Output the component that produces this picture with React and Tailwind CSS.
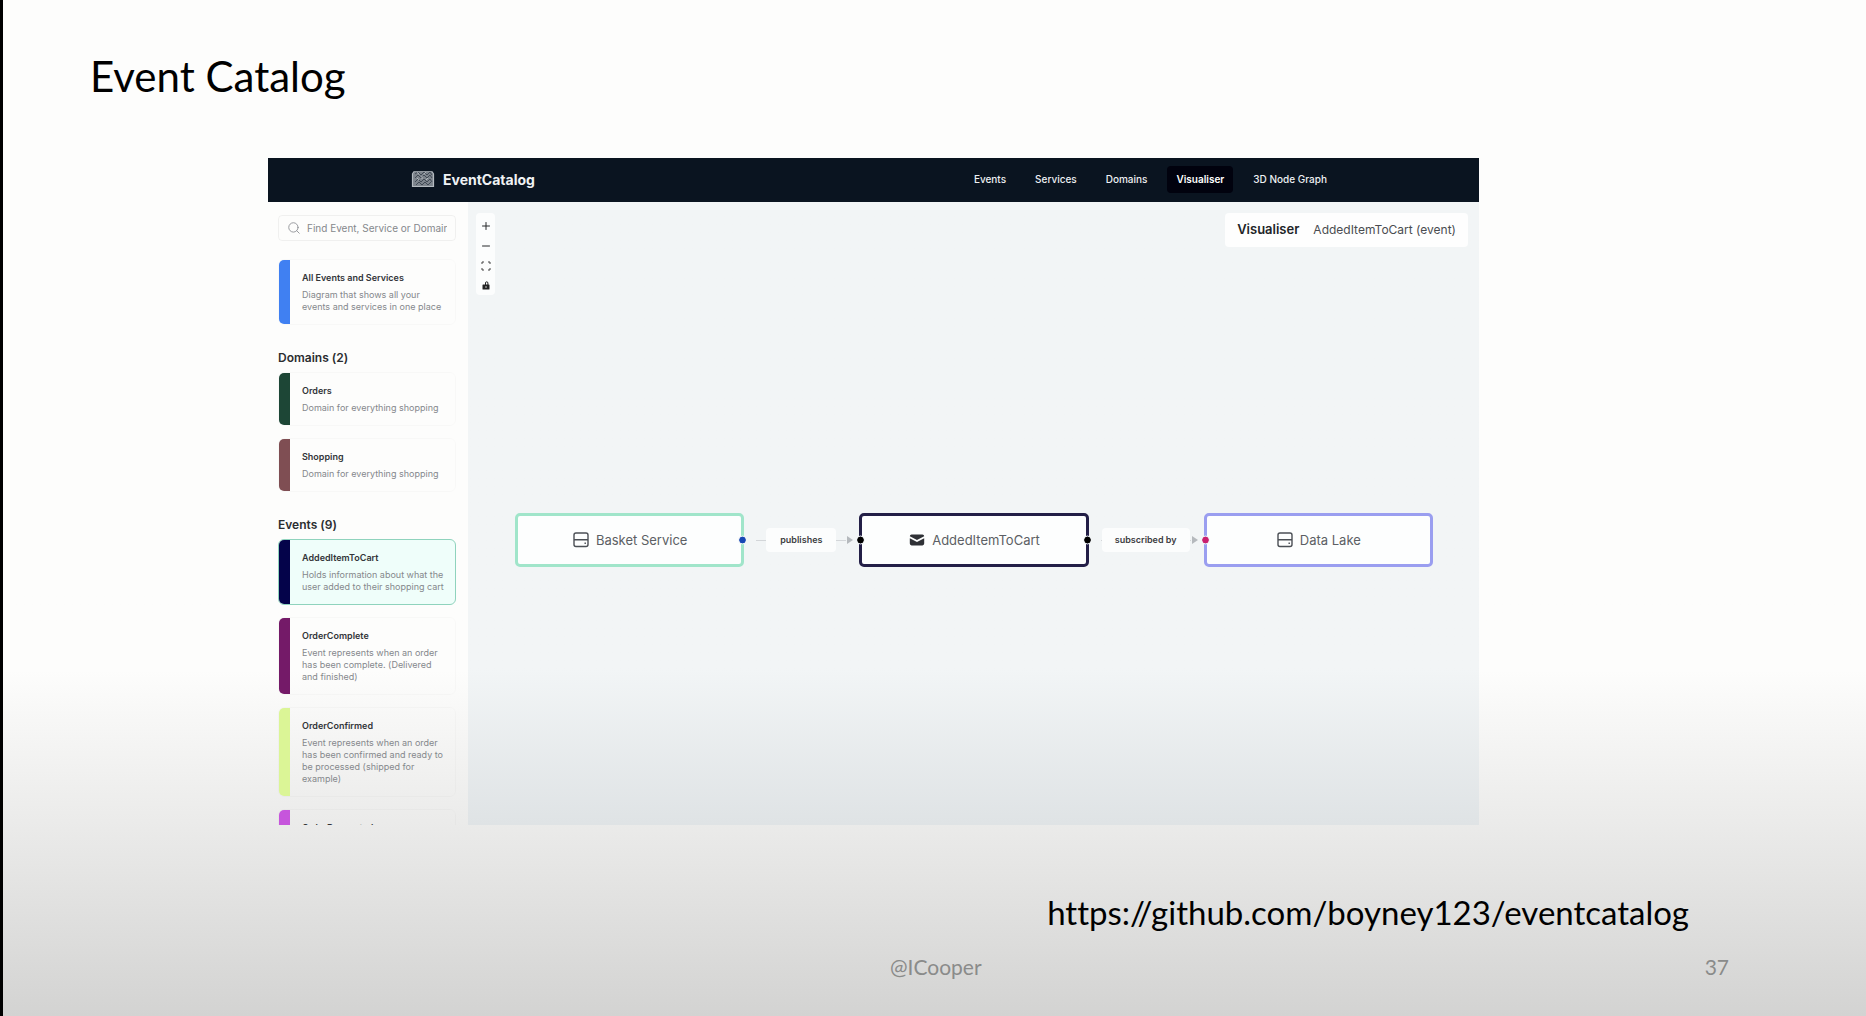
import { Search, Plus, Minus } from "lucide-react";

const ServerIcon = () => (
  <svg width="18" height="18" viewBox="0 0 18 18" fill="none" stroke="#4b4f55" strokeWidth="1.4" aria-hidden="true">
    <rect x="2" y="2" width="14" height="13.500" rx="2" />
    <path d="M2 8.800h14M12.500 12.300h1.400" />
  </svg>
);

const MailIcon = () => (
  <svg width="18" height="18" viewBox="0 0 20 20" fill="#2f3136" aria-hidden="true">
    <path d="M2.003 5.884L10 9.882l7.997-3.998A2 2 0 0016 4H4a2 2 0 00-1.997 1.884z" />
    <path d="M18 8.118l-8 4-8-4V14a2 2 0 002 2h12a2 2 0 002-2V8.118z" />
  </svg>
);

const Logo = () => (
  <svg width="24" height="18" viewBox="0 0 24 18" fill="none" aria-hidden="true">
    <path d="M3 1.500h18l1 2.500v12.500H2V4z" fill="#7d848c" />
    <path d="M4 4l3-2 3 3 3-3 3 3 3-3 2 3M4 8l3-3 3 3 3-3 3 3 3-3 2 3M4 12l3-3 3 3 3-3 3 3 3-3 2 3M5 15l3-3 3 3 3-3 3 3 3-3" stroke="#3a444f" strokeWidth="0.9" />
    <path d="M6 1.500l2 3M15 1.500l-2 3M6 8l2 2M17 8l-2 2M11 6v3" stroke="#c3c8cd" strokeWidth="0.8" />
    <path d="M3 1.500L1.500 4v12.500h21V4L21 1.500" stroke="#b4bac0" strokeWidth="1.2" />
    <path d="M3 1.500h18" stroke="#8f969d" strokeWidth="1" />
  </svg>
);

const NAV = ["Events", "Services", "Domains", "Visualiser", "3D Node Graph"];

function Card({ bar, title, text, active }) {
  return (
    <a
      href="#"
      className={
        "flex shrink-0 overflow-hidden rounded-md border " +
        (active ? "border-[#8fd3bd] bg-[#effefa]" : "border-black/[0.02]")
      }
    >
      <span className={"w-[11px] shrink-0 " + bar} />
      <span className="block min-w-0 pt-[13px] pb-[11px] pl-3">
        <span className="block text-[9px] leading-[10px] font-semibold text-[#333539]">{title}</span>
        <span className="mt-[6px] block text-[9px] leading-3 whitespace-pre-line text-[#85888c]">{text}</span>
      </span>
    </a>
  );
}

function Dot({ side, color }) {
  return (
    <span
      className={
        "absolute top-1/2 size-[7px] -translate-y-1/2 rounded-full outline outline-[#f2f5f7] " +
        (side === "left" ? "-left-[5px] " : "-right-[5px] ") + color
      }
    />
  );
}

function Node({ border, icon, label, left, right }) {
  return (
    <div className={"relative flex h-[54px] flex-1 items-center justify-center gap-[6px] rounded-[5px] border-[3px] bg-[#fdfefe] " + border}>
      {left && <Dot side="left" color={left} />}
      {icon}
      <span className="text-[13px] leading-4 text-[#5c5f64]">{label}</span>
      {right && <Dot side="right" color={right} />}
    </div>
  );
}

function Edge({ label, wide }) {
  return (
    <div className="flex w-[115px] items-center justify-center">
      <span className="ml-3 h-px flex-1 bg-[#d3d6d9]" />
      <span className={"rounded bg-white/80 text-center text-[9px] leading-6 font-semibold text-[#3c3e42] " + (wide ? "w-[88px]" : "w-[70px]")}>{label}</span>
      <span className="h-px flex-1 bg-[#d3d6d9]" />
      <svg width="8" height="8" viewBox="0 0 8 8" className="mr-[5px]" aria-hidden="true">
        <path d="M1 0l6 4-6 4z" fill="#b5b9bd" />
      </svg>
    </div>
  );
}

export default function App() {
  return (
    <main className="flex min-h-screen flex-col border-l-[3px] border-black bg-linear-to-b from-[#fdfdfc] from-66% via-[#e6e6e5] via-85% to-[#d3d3d2] font-[Lato,sans-serif] [font-variant-ligatures:none]">
      <h1 className="px-[87px] pt-[50px] text-[42px] leading-[52px] text-black">Event Catalog</h1>

      <section className="mr-[387px] ml-[265px] mt-14 flex h-[667px] flex-col font-[Inter,sans-serif]">
        <header className="flex h-11 shrink-0 items-center justify-between bg-[#0a1420] px-[143px] pb-[2px]">
          <a href="#" className="flex items-center gap-2 text-[14px] font-bold text-[#f0f2f4]">
            <Logo />
            EventCatalog
          </a>
          <nav className="flex items-center gap-[11px] text-[10px] font-medium text-[#eef0f3]">
            {NAV.map((n) => (
              <a key={n} href="#" className={"rounded px-[9px] leading-[27px] " + (n === "Visualiser" ? "bg-[#01020e] font-semibold text-white" : "")}>
                {n}
              </a>
            ))}
          </nav>
        </header>

        <div className="flex min-h-0 flex-1">
          <aside className="flex w-[200px] shrink-0 flex-col overflow-hidden pr-3 pl-[10px] pt-[13px]">
            <label className="flex h-[26px] shrink-0 items-center gap-[6px] rounded border border-black/5 pl-2">
              <Search size={14} strokeWidth={1.5} className="shrink-0 text-[#8b8e92]" aria-hidden="true" />
              <input
                aria-label="Find Event, Service or Domain"
                placeholder="Find Event, Service or Domain"
                className="mr-2 w-0 flex-1 bg-transparent text-[10px] outline-none placeholder:text-[#85888c]"
              />
            </label>
            <div className="mt-[18px] flex flex-col">
              <Card bar="bg-[#4080f2]" title="All Events and Services" text={"Diagram that shows all your\nevents and services in one place"} />
            </div>
            <h2 className="mt-[25px] mb-[6px] text-[12px] leading-4 font-semibold text-[#2b2d30]">Domains (2)</h2>
            <div className="flex flex-col gap-3">
              <Card bar="bg-[#1d4636]" title="Orders" text="Domain for everything shopping" />
              <Card bar="bg-[#7f4e53]" title="Shopping" text="Domain for everything shopping" />
            </div>
            <h2 className="mt-[25px] mb-[6px] text-[12px] leading-4 font-semibold text-[#2b2d30]">Events (9)</h2>
            <div className="flex flex-col gap-3">
              <Card active bar="bg-[#04034a]" title="AddedItemToCart" text={"Holds information about what the\nuser added to their shopping cart"} />
              <Card bar="bg-[#741a68]" title="OrderComplete" text={"Event represents when an order\nhas been complete. (Delivered\nand finished)"} />
              <Card bar="bg-[#dbf596]" title="OrderConfirmed" text={"Event represents when an order\nhas been confirmed and ready to\nbe processed (shipped for\nexample)"} />
              <Card bar="bg-[#c655dc]" title="OrderRequested" />
            </div>
          </aside>

          <div className="flex flex-1 flex-col bg-linear-to-b from-[#f2f5f6] from-75% to-[#dfe3e5]">
            <div className="flex items-start justify-between pt-[11px] pr-[11px] pl-2">
              <div className="flex w-[19px] flex-col rounded-sm bg-white/80 pt-[3px] text-[#26282b]">
                <button aria-label="Zoom in" className="flex h-5 items-center justify-center"><Plus size={12} /></button>
                <button aria-label="Zoom out" className="flex h-5 items-center justify-center"><Minus size={12} /></button>
                <button aria-label="Fit view" className="flex h-[19px] items-center justify-center">
                  <svg width="10" height="10" viewBox="0 0 10 10" fill="none" stroke="#444" aria-hidden="true">
                    <path d="M1 3V1H3M7 1h2V3M9 7v2H7M3 9H1V7" />
                  </svg>
                </button>
                <button aria-label="Lock" className="flex h-5 items-center justify-center">
                  <svg width="8" height="9" viewBox="0 0 8 9" fill="none" aria-hidden="true">
                    <rect x="0.500" y="3.500" width="7" height="5" rx="0.600" fill="#222" />
                    <path d="M3.500 4V2a1.200 1.200 0 012.400 0v2" stroke="#222" />
                    <circle cx="4" cy="6" r="0.800" fill="#ddd" />
                  </svg>
                </button>
              </div>
              <div className="flex h-[34px] items-center gap-[14px] rounded bg-white/90 px-3 text-[#4a4c50]">
                <strong className="text-[13px] font-semibold text-[#222427]">Visualiser</strong>
                <span className="text-[12px]">AddedItemToCart (event)</span>
              </div>
            </div>
            <div className="mt-[218px] mr-[46px] ml-[47px] flex items-center">
              <Node border="border-[#a0e5ca]" icon={<ServerIcon />} label="Basket Service" right="bg-[#1747b5]" />
              <Edge label="publishes" />
              <Node border="border-[#231f47]" icon={<MailIcon />} label="AddedItemToCart" left="bg-black" right="bg-black" />
              <Edge label="subscribed by" wide />
              <Node border="border-[#9a9ef0]" icon={<ServerIcon />} label="Data Lake" left="bg-[#c91f6f]" />
            </div>
          </div>
        </div>
      </section>

      <a href="https://github.com/boyney123/eventcatalog" className="mt-[67px] mr-[177px] self-end text-[33px] leading-10 text-black">
        https://github.com/boyney123/eventcatalog
      </a>
      <footer className="mt-[21px] mr-[137px] ml-[887px] flex justify-between text-[21px] leading-7 text-[#8a8b8a]">
        <span>@ICooper</span>
        <span>37</span>
      </footer>
    </main>
  );
}
